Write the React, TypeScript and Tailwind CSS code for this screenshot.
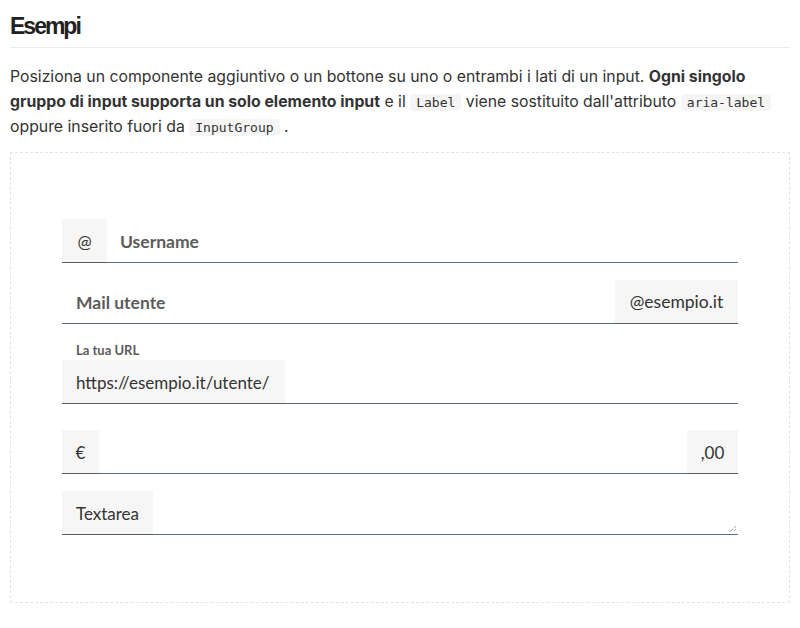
import React from "react";

const code = "rounded bg-[#f5f5f5] px-[6px] py-[1px] font-['DejaVu_Sans_Mono',monospace] text-[13px] leading-[18px] text-[#333]";

export default function App() {
  return (
    <div className="min-h-[628px] bg-white px-[10px] pt-[12px] font-['Inter',sans-serif] text-[#333]">
      <h2 className="border-b border-[#eaeaea] pb-[7px] font-['Liberation_Sans',sans-serif] text-[23px] font-bold leading-[28px] tracking-[-2px] text-[#222]">
        Esempi
      </h2>
      <p className="mt-[16px] text-[15.8px] leading-[25px] text-[#333]">
        Posiziona un componente aggiuntivo o un bottone su uno o entrambi i lati di un input.{" "}
        <strong className="font-bold">Ogni singolo gruppo di input supporta un solo elemento input</strong> e il{" "}
        <code className={code}>Label</code> viene sostituito dall'attributo{" "}
        <code className={code}>aria-label</code> oppure inserito fuori da{" "}
        <code className={code}>InputGroup</code> .
      </p>
      <div className="mt-[13px] border border-dashed border-[#e3e3e3] px-[51px] pb-[67px] pt-[66px] font-['Lato',sans-serif]">
        <div className="flex h-[44px]">
          <div className="flex w-[45px] items-center justify-center border-b border-[#5c5c5c] bg-[#f6f6f6] pt-[2px] text-[17px] text-[#333]">@</div>
          <div className="flex flex-1 items-center border-b border-[#5c6f82] pl-[13px] pt-[3px] text-[17.5px] font-bold text-[#5c5c5c]">Username</div>
        </div>
        <div className="mt-[17px] flex h-[44px]">
          <div className="flex flex-1 items-center border-b border-[#5c6f82] pl-[14px] pt-[3px] text-[17.5px] font-bold text-[#5c5c5c]">Mail utente</div>
          <div className="flex w-[123px] items-center justify-center border-b border-[#5c5c5c] bg-[#f6f6f6] pt-[2px] text-[17.5px] text-[#333]">@esempio.it</div>
        </div>
        <div className="mt-[16px] pl-[14px] text-[13px] font-bold leading-[20px] text-[#5c5c5c]">La tua URL</div>
        <div className="flex h-[44px]">
          <div className="flex w-[223px] items-center border-b border-[#5c5c5c] bg-[#f6f6f6] pl-[14px] pt-[2px] text-[17px] text-[#333]">https://esempio.it/utente/</div>
          <div className="flex-1 border-b border-[#5c6f82]" />
        </div>
        <div className="mt-[26px] flex h-[44px]">
          <div className="flex w-[37px] items-center justify-center border-b border-[#5c5c5c] bg-[#f6f6f6] pt-[2px] text-[17px] text-[#333]">€</div>
          <div className="flex-1 border-b border-[#5c6f82]" />
          <div className="flex w-[51px] items-center justify-center border-b border-[#5c5c5c] bg-[#f6f6f6] pt-[2px] text-[17px] text-[#333]">,00</div>
        </div>
        <div className="mt-[17px] flex h-[44px]">
          <div className="flex w-[91px] items-center justify-center border-b border-[#5c5c5c] bg-[#f6f6f6] pt-[2px] text-[17px] text-[#333]">Textarea</div>
          <div className="relative flex-1 border-b border-[#5c6f82]">
            <svg className="absolute bottom-[1px] right-[1px]" width="8" height="8" viewBox="0 0 8 8">
              <path d="M7 1 L1 7 M7 4 L4 7" stroke="#777" strokeWidth="1" strokeDasharray="1 1" />
            </svg>
          </div>
        </div>
      </div>
    </div>
  );
}
